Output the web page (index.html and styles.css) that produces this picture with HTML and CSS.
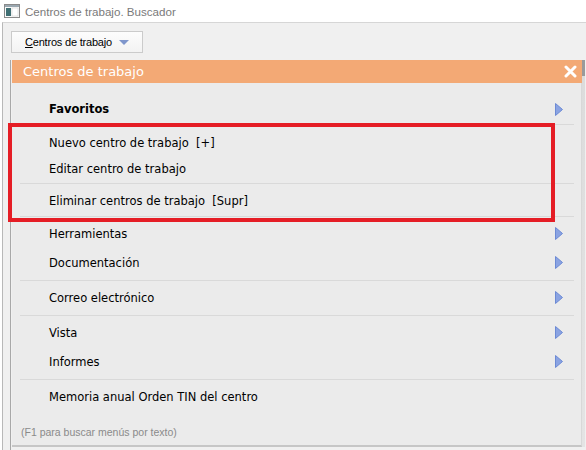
FILE: index.html
```html
<!DOCTYPE html>
<html lang="es">
<head>
<meta charset="utf-8">
<title>Centros de trabajo. Buscador</title>
<link rel="stylesheet" href="styles.css">
</head>
<body>
<div class="window">
  <div class="titlebar">
    <svg class="appicon" width="16" height="14" viewBox="0 0 16 14">
      <rect x="0.5" y="0.5" width="15" height="13" fill="#fafafa" stroke="#8a8a8a"/>
      <rect x="1" y="1" width="14" height="2" fill="#9aa7b0"/>
      <rect x="2" y="4" width="5" height="8" fill="#3f6f73"/>
      <rect x="8" y="4" width="6" height="8" fill="#ffffff" stroke="#c9c9c9" stroke-width="0.5"/>
    </svg>
    <span class="title">Centros de trabajo. Buscador</span>
  </div>
  <div class="client">
    <div class="toolbar">
      <button class="dropbtn"><span><u>C</u>entros de trabajo</span>
        <svg width="10" height="5" viewBox="0 0 10 5"><polygon points="0,0 10,0 5,5" fill="#7f96cc"/></svg>
      </button>
    </div>
    <div class="gridarea">
      <div class="popup">
        <div class="popup-head">
          <span>Centros de trabajo</span>
          <svg class="close" width="13" height="13" viewBox="0 0 13 13"><path d="M2 2 L11 11 M11 2 L2 11" stroke="#fff" stroke-width="3" stroke-linecap="round"/></svg>
        </div>
        <div class="popup-body">
          <div class="group first">
            <div class="row bold">Favoritos<svg class="arrow" width="8" height="13" viewBox="0 0 8 13"><polygon points="0.5,0.5 7.5,6.5 0.5,12.5" fill="#8aa3e2" stroke="#6c8ad4"/></svg></div>
          </div>
          <div class="group tight">
            <div class="row">Nuevo centro de trabajo&nbsp; [+]</div>
            <div class="row">Editar centro de trabajo</div>
          </div>
          <div class="group tight-single">
            <div class="row">Eliminar centros de trabajo&nbsp; [Supr]</div>
          </div>
          <div class="group">
            <div class="row">Herramientas<svg class="arrow" width="8" height="13" viewBox="0 0 8 13"><polygon points="0.5,0.5 7.5,6.5 0.5,12.5" fill="#8aa3e2" stroke="#6c8ad4"/></svg></div>
            <div class="row">Documentación<svg class="arrow" width="8" height="13" viewBox="0 0 8 13"><polygon points="0.5,0.5 7.5,6.5 0.5,12.5" fill="#8aa3e2" stroke="#6c8ad4"/></svg></div>
          </div>
          <div class="group">
            <div class="row">Correo electrónico<svg class="arrow" width="8" height="13" viewBox="0 0 8 13"><polygon points="0.5,0.5 7.5,6.5 0.5,12.5" fill="#8aa3e2" stroke="#6c8ad4"/></svg></div>
          </div>
          <div class="group">
            <div class="row">Vista<svg class="arrow" width="8" height="13" viewBox="0 0 8 13"><polygon points="0.5,0.5 7.5,6.5 0.5,12.5" fill="#8aa3e2" stroke="#6c8ad4"/></svg></div>
            <div class="row">Informes<svg class="arrow" width="8" height="13" viewBox="0 0 8 13"><polygon points="0.5,0.5 7.5,6.5 0.5,12.5" fill="#8aa3e2" stroke="#6c8ad4"/></svg></div>
          </div>
          <div class="group">
            <div class="row">Memoria anual Orden TIN del centro</div>
          </div>
          <div class="hint">(F1 para buscar menús por texto)</div>
        </div>
      </div>
      <div class="scrollstrip"></div>
    </div>
  </div>
  <div class="highlight"></div>
</div>
</body>
</html>
```
FILE: styles.css
```css
* { box-sizing: border-box; }
html, body { margin: 0; padding: 0; background: #ffffff; }
body { font-family: "DejaVu Sans", Verdana, sans-serif; }

.window {
  position: relative;
  width: 586px;
  height: 450px;
  overflow: hidden;
  background: #ffffff;
  display: flex;
  flex-direction: column;
}

.titlebar {
  height: 22px;
  display: flex;
  align-items: center;
  gap: 5px;
  padding-left: 4px;
  flex: none;
}
.title {
  font-family: "Liberation Sans", Arial, sans-serif;
  font-size: 11.6px;
  color: #7a7a7a;
}

.client {
  flex: 1;
  margin-left: 2px;
  background: #f0f0f0;
  border-top: 1px solid #d6d6d6;
  border-left: 1px solid #b8b8b8;
  display: flex;
  flex-direction: column;
}

.toolbar {
  padding: 8px 0 0 8px;
  height: 37px;
  flex: none;
}
.dropbtn {
  height: 22px;
  width: 132px;
  margin: 0;
  padding: 0 0 0 13px;
  display: flex;
  align-items: center;
  gap: 7px;
  border: 1px solid #cbcbcb;
  background: linear-gradient(#fdfdfd, #f3f3f3);
  font-family: "Liberation Sans", Arial, sans-serif;
  font-size: 11px;
  letter-spacing: -0.2px;
  color: #000;
}
.dropbtn u { text-decoration: underline; }

.gridarea {
  flex: 1;
  display: flex;
  margin-left: 7px;
  border-left: 1px solid #a8a8a8;
  padding-left: 1px;
}

.popup {
  width: 570px;
  display: flex;
  flex-direction: column;
  height: 387px;
}
.popup-head {
  height: 23px;
  background: #f3a975;
  color: #ffffff;
  font-size: 13px;
  display: flex;
  align-items: center;
  justify-content: space-between;
  padding: 0 5px 0 11px;
  flex: none;
}
.close { display: block; }

.popup-body {
  flex: 1;
  background: #ebebeb;
  border-bottom: 2px solid #c6c6c6;
  border-right: 1px solid #d8d8d8;
  padding-top: 7px;
  font-size: 11.5px;
  color: #000;
}

.group {
  padding: 2px 0 3px;
  margin: 0 7px 0 8px;
  border-top: 1px solid #d9d9d9;
}
.row {
  height: 29px;
  display: flex;
  align-items: center;
  justify-content: space-between;
  padding: 0 11px 0 29px;
}
.group.first { border-top: none; padding-top: 5px; padding-bottom: 1px; }
.group.first .row { height: 28px; }
.group.tight { padding-top: 5px; padding-bottom: 1px; }
.group.tight .row { height: 26px; }
.group.tight-single { padding-top: 3px; padding-bottom: 1px; }
.group.tight-single .row { height: 28px; }
.row.bold { font-weight: bold; }
.arrow { display: block; }

.hint {
  margin-top: 12px;
  padding-left: 9px;
  font-family: "Liberation Sans", Arial, sans-serif;
  font-size: 10.5px;
  color: #8a8a8a;
}

.scrollstrip {
  width: 3px;
  height: 387px;
  background: linear-gradient(#9a9a9a 0, #9a9a9a 16px, #dcdcdc 16px, #e4e4e4 100%);
}

.highlight {
  position: absolute;
  left: 8px;
  top: 123px;
  width: 547px;
  height: 99px;
  border: 4px solid #e51d25;
}
```
